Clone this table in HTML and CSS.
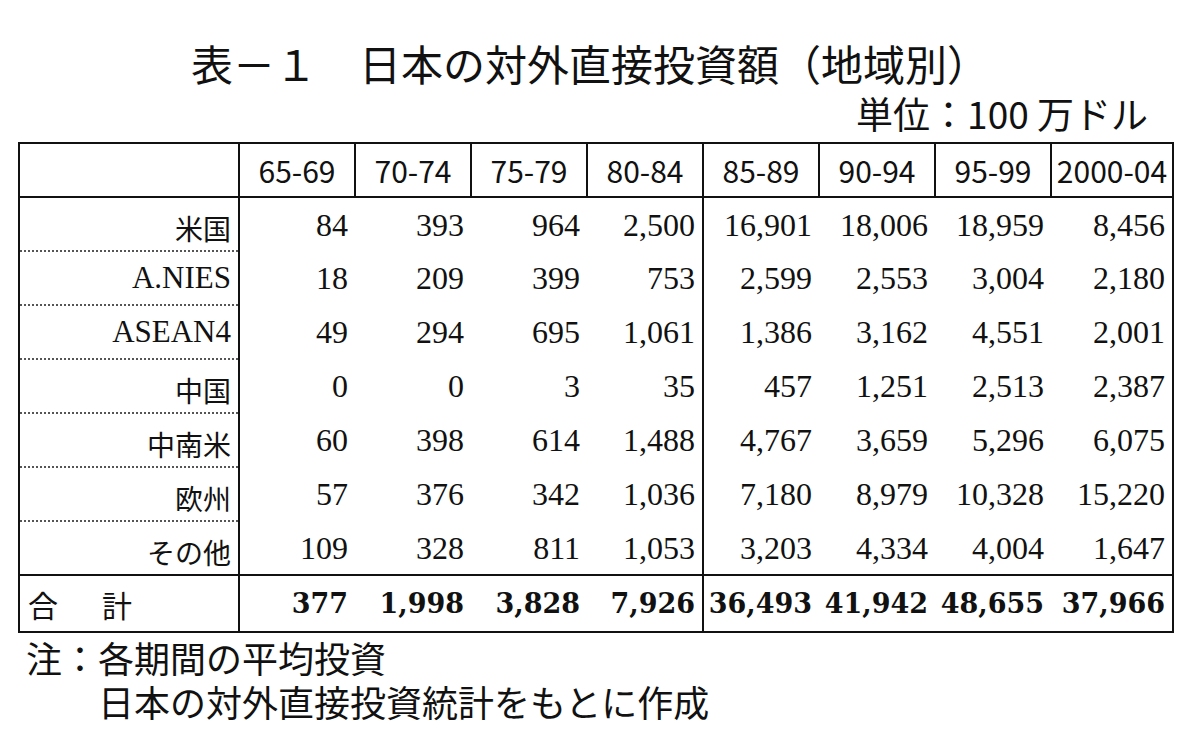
FILE: index.html
```html
<!DOCTYPE html>
<html lang="ja">
<head>
<meta charset="utf-8">
<title>表－１ 日本の対外直接投資額（地域別）</title>
<link rel="stylesheet" href="styles.css">
</head>
<body>
<div class="page">
  <h1 class="title">表－１　日本の対外直接投資額（地域別）</h1>
  <div class="unit">単位：100 万ドル</div>
  <table class="data">
    <colgroup>
      <col class="c-label">
      <col class="c-num"><col class="c-num"><col class="c-num"><col class="c-num">
      <col class="c-num"><col class="c-num"><col class="c-num"><col class="c-last">
    </colgroup>
    <thead>
      <tr>
        <th class="lab"></th>
        <th>65-69</th><th>70-74</th><th>75-79</th><th>80-84</th>
        <th>85-89</th><th>90-94</th><th>95-99</th><th class="last">2000-04</th>
      </tr>
    </thead>
    <tbody>
      <tr>
        <td class="lab jp">米国</td>
        <td>84</td><td>393</td><td>964</td><td class="split">2,500</td>
        <td>16,901</td><td>18,006</td><td>18,959</td><td>8,456</td>
      </tr>
      <tr>
        <td class="lab lat">A.NIES</td>
        <td>18</td><td>209</td><td>399</td><td class="split">753</td>
        <td>2,599</td><td>2,553</td><td>3,004</td><td>2,180</td>
      </tr>
      <tr>
        <td class="lab lat">ASEAN4</td>
        <td>49</td><td>294</td><td>695</td><td class="split">1,061</td>
        <td>1,386</td><td>3,162</td><td>4,551</td><td>2,001</td>
      </tr>
      <tr>
        <td class="lab jp">中国</td>
        <td>0</td><td>0</td><td>3</td><td class="split">35</td>
        <td>457</td><td>1,251</td><td>2,513</td><td>2,387</td>
      </tr>
      <tr>
        <td class="lab jp">中南米</td>
        <td>60</td><td>398</td><td>614</td><td class="split">1,488</td>
        <td>4,767</td><td>3,659</td><td>5,296</td><td>6,075</td>
      </tr>
      <tr>
        <td class="lab jp">欧州</td>
        <td>57</td><td>376</td><td>342</td><td class="split">1,036</td>
        <td>7,180</td><td>8,979</td><td>10,328</td><td>15,220</td>
      </tr>
      <tr class="lastrow">
        <td class="lab jp">その他</td>
        <td>109</td><td>328</td><td>811</td><td class="split">1,053</td>
        <td>3,203</td><td>4,334</td><td>4,004</td><td>1,647</td>
      </tr>
    </tbody>
    <tfoot>
      <tr>
        <td class="lab total-label">合　計</td>
        <td>377</td><td>1,998</td><td>3,828</td><td class="split">7,926</td>
        <td>36,493</td><td>41,942</td><td>48,655</td><td>37,966</td>
      </tr>
    </tfoot>
  </table>
  <div class="notes">
    <p class="note-line">注：各期間の平均投資</p>
    <p class="note-line indent">日本の対外直接投資統計をもとに作成</p>
  </div>
</div>
</body>
</html>
```

FILE: styles.css
```css
html, body {
  margin: 0;
  padding: 0;
  background: #ffffff;
}

body {
  color: #111;
  font-family: "Noto Sans CJK JP", "Noto Sans", sans-serif;
}

.page {
  width: 1200px;
  height: 754px;
  padding: 0 28px 0 18px;
  box-sizing: border-box;
}

.title {
  margin: 0;
  padding: 38px 10px 0 0;
  font-size: 42px;
  font-weight: 400;
  line-height: 50px;
  text-align: center;
}

.unit {
  margin: 0;
  padding: 2px 24px 0 0;
  font-size: 37px;
  line-height: 46px;
  text-align: right;
}

.data {
  margin-top: 6px;
  width: 1154px;
  table-layout: fixed;
  border-collapse: collapse;
  border: 2.5px solid #111;
}

.c-label { width: 220px; }
.c-num { width: 116px; }
.c-last { width: 122px; }

.data th,
.data td {
  box-sizing: border-box;
  line-height: 36px;
  white-space: nowrap;
  vertical-align: middle;
}

.data th {
  height: 54px;
  padding: 0;
  font-family: "Noto Sans CJK JP", "Noto Sans", sans-serif;
  font-size: 30px;
  font-weight: 400;
  text-align: center;
  border-right: 2px solid #111;
  border-bottom: 2px solid #111;
}

.data td {
  height: 54px;
  padding: 0 7px 0 0;
  font-family: "Liberation Serif", "Times New Roman", serif;
  font-size: 32px;
  text-align: right;
}

.data td.lab {
  border-right: 2px solid #111;
  border-bottom: 2px dotted #555;
}

.data tr.lastrow td.lab {
  border-bottom: none;
}

.data td.split {
  border-right: 2px solid #111;
}

.data td.jp {
  font-family: "Noto Sans CJK JP", "Noto Sans", sans-serif;
  font-size: 28px;
  padding-top: 8px;
}

.data td.lat {
  font-family: "Liberation Serif", "Times New Roman", serif;
  font-size: 31px;
}

.data tfoot td {
  height: 57px;
  border-top: 2.5px solid #111;
  font-family: "DejaVu Serif", "Liberation Serif", serif;
  font-weight: 700;
  font-size: 27px;
}

.data tfoot td.total-label {
  font-family: "Noto Sans CJK JP", "Noto Sans", sans-serif;
  font-weight: 400;
  font-size: 30px;
  text-align: left;
  padding-left: 8px;
  letter-spacing: 7px;
  border-bottom: none;
}

.notes {
  padding-left: 8px;
  padding-top: 2px;
}

.note-line {
  margin: 0;
  font-size: 36px;
  line-height: 44px;
}

.note-line.indent {
  padding-left: 72px;
}
```
